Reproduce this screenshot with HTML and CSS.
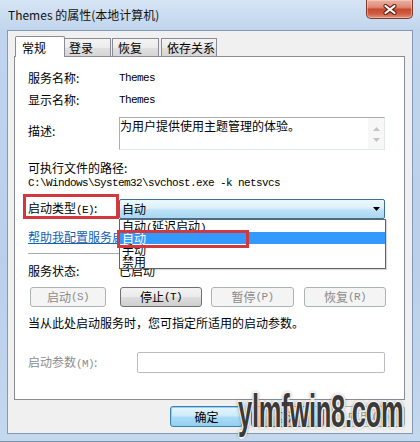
FILE: index.html
```html
<!DOCTYPE html>
<html lang="zh-CN">
<head>
<meta charset="utf-8">
<title>Themes 的属性(本地计算机)</title>
<link rel="stylesheet" href="styles.css">
</head>
<body>
<div class="window">
  <div class="titlebar">
    <span class="title">Themes 的属性(本地计算机)</span>
    <div class="close">
      <svg width="14" height="11" viewBox="0 0 14 11">
        <path d="M2.5 2 L11.5 9 M11.5 2 L2.5 9" stroke="#6a2418" stroke-width="4.2" stroke-linecap="round" fill="none"/>
        <path d="M2.5 2 L11.5 9 M11.5 2 L2.5 9" stroke="#ffffff" stroke-width="2.2" stroke-linecap="round" fill="none"/>
      </svg>
    </div>
  </div>
  <div class="client">
    <div class="tabs">
      <div class="tab active">常规</div>
      <div class="tab t2">登录</div>
      <div class="tab t3">恢复</div>
      <div class="tab t4">依存关系</div>
    </div>
    <div class="panel">
      <div class="row r-name"><span class="lbl">服务名称:</span><span class="m val">Themes</span></div>
      <div class="row r-disp"><span class="lbl">显示名称:</span><span class="m val">Themes</span></div>
      <div class="row r-desc">
        <span class="lbl lbl-desc">描述:</span>
        <div class="textbox">
          <span class="tb-text">为用户提供使用主题管理的体验。</span>
          <div class="tb-scroll">
            <svg width="7" height="4" viewBox="0 0 7 4"><path d="M0 4 L3.5 0 L7 4 Z" fill="#c4c4c4"/></svg>
            <svg width="7" height="4" viewBox="0 0 7 4"><path d="M0 0 L3.5 4 L7 0 Z" fill="#c4c4c4"/></svg>
          </div>
        </div>
      </div>
      <div class="row r-pathlbl"><span>可执行文件的路径:</span></div>
      <div class="row r-path"><span class="m">C:\Windows\System32\svchost.exe -k netsvcs</span></div>
      <div class="row r-type">
        <span class="lbl">启动类型<span class="m">(E)</span>:</span>
        <div class="combo">
          <span>自动</span>
          <svg width="7" height="4" viewBox="0 0 7 4"><path d="M0 0 L3.5 4 L7 0 Z" fill="#000"/></svg>
          <ul class="droplist">
            <li>自动<span class="m">(</span>延迟启动<span class="m">)</span></li>
            <li class="sel">自动</li>
            <li>手动</li>
            <li>禁用</li>
          </ul>
        </div>
        <div class="mark mark-label"></div>
        <div class="mark mark-item"></div>
      </div>
      <div class="row r-link"><a class="link">帮助我配置服务启动选项。</a></div>
      <div class="sep"></div>
      <div class="row r-status"><span class="lbl">服务状态:</span><span class="val">已启动</span></div>
      <div class="row r-btns">
        <span class="btn dis b1">启动<span class="m">(S)</span></span>
        <span class="btn b2">停止<span class="m">(T)</span></span>
        <span class="btn dis b3">暂停<span class="m">(P)</span></span>
        <span class="btn dis b4">恢复<span class="m">(R)</span></span>
      </div>
      <div class="row r-help"><span>当从此处启动服务时，您可指定所适用的启动参数。</span></div>
      <div class="row r-param">
        <span class="lbl lbl-param">启动参数<span class="m">(M)</span>:</span>
        <div class="input"></div>
      </div>
    </div>
    <div class="footer">
      <span class="btn fbtn def">确定</span>
      <span class="btn fbtn">取消</span>
      <span class="btn fbtn dis">应用<span class="m">(A)</span></span>
    </div>
  </div>
  <div class="watermark">ylmfwin8.com</div>
</div>
</body>
</html>
```

FILE: styles.css
```css
* { box-sizing: border-box; }
html, body { margin: 0; padding: 0; }
body {
  width: 420px;
  height: 442px;
  overflow: hidden;
  font-family: "Noto Sans CJK SC", "Noto Sans", sans-serif;
  font-size: 12px;
  color: #000;
}
.window {
  position: relative;
  width: 420px;
  height: 442px;
  display: flex;
  flex-direction: column;
  padding: 0 7px 8px;
  background: linear-gradient(180deg, #d6e5f5 0px, #c0d5ed 30px, #bad0ea 60%, #c4d8ee 100%);
  border-bottom: 1px solid #7d93ad;
}
.titlebar {
  height: 30px;
  display: flex;
  align-items: flex-start;
  flex: none;
}
.title {
  margin-left: 1px;
  height: 30px;
  line-height: 30px;
  color: #111;
  font-size: 12px;
}
.close {
  margin-left: auto;
  width: 47px;
  height: 19px;
  border: 1px solid #7a3a2c;
  border-top: none;
  border-radius: 0 0 5px 5px;
  background: linear-gradient(180deg, #eab3a4 0%, #dd8a74 40%, #c74a30 52%, #cf5b3f 75%, #e0907a 100%);
  display: flex;
  align-items: center;
  justify-content: center;
  box-shadow: inset 0 0 0 1px rgba(255, 220, 210, 0.45);
}
.client {
  height: 404px;
  flex: none;
  border: 1px solid #8399b5;
  background: #f0f0f0;
  padding: 5px 7px 0 6px;
  display: flex;
  flex-direction: column;
}
.tabs {
  height: 20px;
  display: flex;
  align-items: flex-end;
  padding-left: 1px;
  flex: none;
}
.tab {
  height: 18px;
  border: 1px solid #898c95;
  border-bottom: none;
  background: linear-gradient(180deg, #f4f4f4 0%, #ececec 50%, #e0e0e0 51%, #d6d6d6 100%);
  line-height: 18px;
  padding-left: 4px;
  white-space: nowrap;
}
.tab.active {
  width: 50px;
  height: 21px;
  margin-bottom: -1px;
  background: #fff;
  position: relative;
  z-index: 1;
  padding-left: 6px;
  line-height: 22px;
  border-radius: 2px 2px 0 0;
}
.t2 { width: 46px; border-left: none; }
.t3 { width: 47px; margin-left: 1px; padding-left: 5px; }
.t4 { width: 56px; margin-left: 2px; padding-left: 5px; }
.panel {
  height: 344px;
  flex: none;
  border: 1px solid #898c95;
  background: #fff;
  padding: 13px 19px 0 13px;
  display: flex;
  flex-direction: column;
}
.row {
  display: flex;
  align-items: center;
  height: 16px;
  line-height: 16px;
  white-space: nowrap;
  flex: none;
}
.lbl { width: 91px; flex: none; }
.m {
  font-family: "Liberation Mono", "DejaVu Sans Mono", monospace;
  font-size: 11px;
  letter-spacing: -0.6px;
}
.r-disp { margin-top: 6px; }
.r-desc { margin-top: 9px; height: 33px; align-items: flex-start; }
.lbl-desc { padding-top: 6px; }
.textbox {
  width: 266px;
  height: 33px;
  border: 1px solid #e2e7ee;
  border-top-color: #abadb3;
  border-left-color: #abadb3;
  display: flex;
  justify-content: space-between;
}
.tb-text { line-height: 15px; }
.tb-scroll {
  width: 16px;
  height: 31px;
  background: #f7f7f7;
  display: flex;
  flex-direction: column;
  align-items: center;
  justify-content: space-around;
  padding: 5px 0 4px;
}
.r-pathlbl { margin-top: 10px; }
.r-path { height: 14px; line-height: 14px; }
.r-type { margin-top: 9px; height: 20px; position: relative; }
.combo {
  position: relative;
  width: 266px;
  height: 20px;
  border: 1px solid #3c6f9c;
  border-radius: 2px;
  background: linear-gradient(180deg, #edf7fd 0%, #dcf0fb 45%, #bde3f7 55%, #a9d6f1 100%);
  display: flex;
  align-items: center;
  justify-content: space-between;
  padding: 0 4px 0 2px;
  line-height: 18px;
}
.droplist {
  position: absolute;
  top: calc(100% + 1px);
  left: -1px;
  width: 267px;
  margin: 0;
  padding: 0;
  list-style: none;
  background: #fff;
  border: 1px solid #646464;
  z-index: 3;
  box-shadow: 1px 1px 1px rgba(0, 0, 0, 0.15);
}
.droplist li {
  height: 12px;
  line-height: 12px;
  padding-left: 2px;
  overflow: visible;
}
.droplist li.sel { background: #3399ff; color: #fff; }
.mark {
  position: absolute;
  border: 3px solid #d3383c;
  z-index: 4;
}
.mark-label { left: -5px; top: -5px; width: 96px; height: 25px; }
.mark-item { left: 89px; top: 31px; width: 132px; height: 18px; }
.r-link { margin-top: 10px; }
.link { color: #1560b0; text-decoration: underline; }
.sep {
  margin-top: 8px;
  height: 1px;
  width: 357px;
  background: #a9a9a9;
  flex: none;
}
.r-status { margin-top: 9px; }
.r-btns { margin-top: 8px; height: 20px; }
.btn {
  display: inline-flex;
  align-items: center;
  justify-content: center;
  height: 20px;
  border: 1px solid #707070;
  border-radius: 3px;
  background: linear-gradient(180deg, #f3f3f3 0%, #ebebeb 48%, #dddddd 52%, #cfcfcf 100%);
  line-height: 18px;
  flex: none;
}
.btn.dis {
  border-color: #adb2b5;
  background: #f4f4f4;
  color: #8a8a8a;
}
.b1 { width: 76px; margin-left: 2px; }
.b2 { width: 82px; margin-left: 14px; }
.b3 { width: 83px; margin-left: 9px; }
.b4 { width: 82px; margin-left: 10px; }
.r-help { margin-top: 8px; }
.r-param { margin-top: 21px; height: 21px; }
.lbl-param { width: 109px; color: #8d8d8d; }
.input {
  width: 248px;
  height: 21px;
  border: 1px solid #b9bdc2;
  border-radius: 2px;
  background: #fff;
}
.footer {
  display: flex;
  justify-content: flex-end;
  gap: 8px;
  margin-top: 6px;
}
.fbtn { width: 73px; height: 21px; }
.btn.def {
  border-color: #3c7fb1;
  background: linear-gradient(180deg, #e6f5fd 0%, #cdebfb 45%, #a9dbf6 55%, #95cff1 100%);
  box-shadow: inset 0 0 0 1px #8fd2f3;
}
.watermark {
  position: absolute;
  left: 238px;
  top: 388px;
  font-family: "Liberation Sans", Arial, sans-serif;
  font-weight: bold;
  font-size: 46px;
  line-height: 46px;
  color: #3a3a3a;
  white-space: nowrap;
  transform: scaleX(0.555);
  transform-origin: left top;
  letter-spacing: -0.5px;
  text-shadow: 1px 1px 0 #f4f4f4, -1px -1px 0 #f4f4f4, 1px -1px 0 #f4f4f4, -1px 1px 0 #f4f4f4,
    2px 0 0 #ededed, -2px 0 0 #ededed, 0 2px 0 #ededed, 0 -2px 0 #ededed, 0 0 5px #555;
  z-index: 5;
}
```
